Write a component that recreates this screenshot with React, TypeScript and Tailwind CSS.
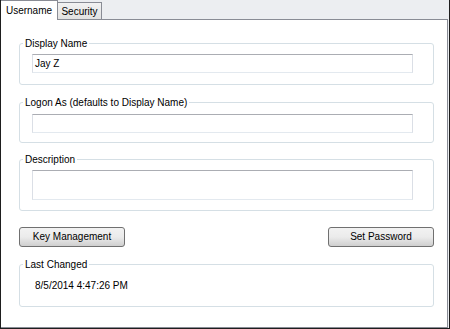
const font = { fontFamily: '"Liberation Sans", Arial, sans-serif' }

function Group({ label, className, children }: { label: string; className?: string; children: React.ReactNode }) {
  return (
    <fieldset className={`w-[415px] rounded-[3px] border border-[#d5dfe5] ${className ?? ''}`}>
      <legend className="ml-[3px] px-[2px] text-[10px] leading-[13px] text-black">{label}</legend>
      {children}
    </fieldset>
  )
}

function TextBox({ value, tall }: { value?: string; tall?: boolean }) {
  return (
    <div
      className={`ml-[12px] w-[381px] border border-[#abadb3] border-x-[#dbdfe6] border-b-[#e3e9ef] bg-white px-[2px] text-[10px] leading-[17px] text-black ${
        tall ? 'h-[30px]' : 'h-[19px]'
      }`}
    >
      {value}
    </div>
  )
}

function Button({ label }: { label: string }) {
  return (
    <button className="h-[20px] w-[106px] rounded-[3px] border border-[#707070] bg-gradient-to-b from-[#f2f2f2] via-[#ebebeb] to-[#cfcfcf] text-[10px] leading-[18px] text-black">
      {label}
    </button>
  )
}

export default function App() {
  return (
    <div style={font} className="flex h-[329px] w-[450px] flex-col border-x border-b border-x-[#1e1e1e] border-b-[#1e1e1e] bg-[#eceef1]">
      <div className="flex h-[19px] items-end">
        <div className="relative z-10 -mb-px flex h-[20px] w-[57px] items-center justify-center border-r border-t border-[#898c95] bg-white text-[10px] text-black">
          Username
        </div>
        <div className="flex h-[17px] w-[44px] items-center justify-center border-r border-t border-[#898c95] bg-gradient-to-b from-[#f2f2f2] to-[#e1e1e1] text-[10px] text-black">
          Security
        </div>
      </div>
      <div className="mr-px flex flex-1 flex-col border-r border-t border-b border-[#898c95] bg-white pl-[18px] pt-[17px]">
        <Group label="Display Name" className="pb-[11px]">
          <div className="mt-[4px]">
            <TextBox value="Jay Z" />
          </div>
        </Group>
        <Group label="Logon As (defaults to Display Name)" className="mt-[11px] pb-[9px]">
          <div className="mt-[5px]">
            <TextBox />
          </div>
        </Group>
        <Group label="Description" className="mt-[10px] pb-[10px]">
          <div className="mt-[4px]">
            <TextBox tall />
          </div>
        </Group>
        <div className="mt-[16px] flex w-[415px] justify-between">
          <Button label="Key Management" />
          <Button label="Set Password" />
        </div>
        <Group label="Last Changed" className="mt-[11px] pb-[14px]">
          <div className="mt-[8px] pl-[15px] text-[10px] leading-[13px] text-black">8/5/2014 4:47:26 PM</div>
        </Group>
      </div>
    </div>
  )
}
